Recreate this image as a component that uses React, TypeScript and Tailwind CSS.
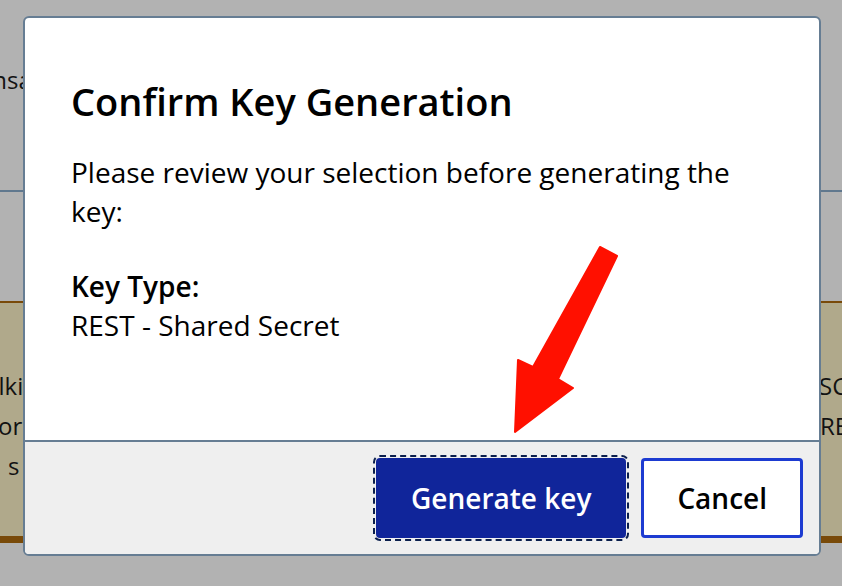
function SetaVermelha() {
  // seta de anotação sobre o diálogo
  return (
    <svg
      className="pointer-events-none absolute left-0 top-0"
      width="842"
      height="586"
      viewBox="0 0 842 586"
    >
      <polygon
        points="600,247 617,256 558,379 573,388 515,432 518,360 533,367"
        fill="#ff1000"
        stroke="#ff1000"
        strokeWidth="2"
        strokeLinejoin="round"
      />
    </svg>
  );
}

function App() {
  return (
    <div
      className="relative h-[586px] w-[842px] overflow-hidden bg-white text-[#1b1b1b]"
      style={{ fontFamily: '"Open Sans", "Noto Sans", sans-serif' }}
    >
      {/* Página por trás do modal */}
      <div className="flex flex-col">
        <div className="h-[192px] border-b-2 border-[#8aaccc] pt-[60px] text-[24px] leading-[40px]">
          <p className="-ml-[44px] whitespace-nowrap">Transactions</p>
        </div>

        <div className="mt-[109px] h-[242px] border-t-2 border-b-[7px] border-[#ae6a0e] bg-[#fdf3c8] pt-[63px] text-[24px] leading-[40px]">
          <div className="flex justify-between">
            <span className="-ml-[37px] whitespace-nowrap">Walking</span>
            <span className="w-[23px] whitespace-nowrap">SCOPE</span>
          </div>
          <div className="flex justify-between">
            <span className="-ml-[10px] whitespace-nowrap">for</span>
            <span className="w-[22px] whitespace-nowrap">REST</span>
          </div>
          <div className="flex justify-between">
            <span className="ml-[8px] whitespace-nowrap">s</span>
            <span></span>
          </div>
        </div>
      </div>

      {/* Sobreposição + diálogo */}
      <div className="absolute inset-0 flex items-start justify-center bg-black/30 pt-4 pl-[2px]">
        <div className="w-[798px] overflow-hidden rounded-[6px] border-2 border-[#667d93] bg-white">
          <div className="pl-[46px] pr-[48px] pt-[61px] pb-[95px] text-black">
            <h2 className="text-[38px] font-semibold leading-[1.2]">
              Confirm Key Generation
            </h2>
            <p className="mt-7 text-[28px] leading-[1.4]">
              Please review your selection before generating the key:
            </p>
            <div className="mt-9 text-[28px] leading-[1.4]">
              <p className="font-semibold">Key Type:</p>
              <p>REST - Shared Secret</p>
            </div>
          </div>

          <div className="flex justify-end gap-[15px] border-t-2 border-[#667d93] bg-[#efefef] px-4 pt-4 pb-4">
            <button
              type="button"
              className="rounded-[4px] border-[3px] border-[#10259a] bg-[#10259a] px-[32px] py-[18px] text-[28px] font-semibold leading-[38px] text-white outline-2 outline-offset-[1px] outline-dashed outline-[#0b1f4d]"
            >
              Generate key
            </button>
            <button
              type="button"
              className="rounded-[4px] border-[3px] border-[#1d3bd1] bg-white px-[33px] py-[18px] text-[28px] font-semibold leading-[38px] text-black"
            >
              Cancel
            </button>
          </div>
        </div>
      </div>

      <SetaVermelha />
    </div>
  );
}

export default App;
